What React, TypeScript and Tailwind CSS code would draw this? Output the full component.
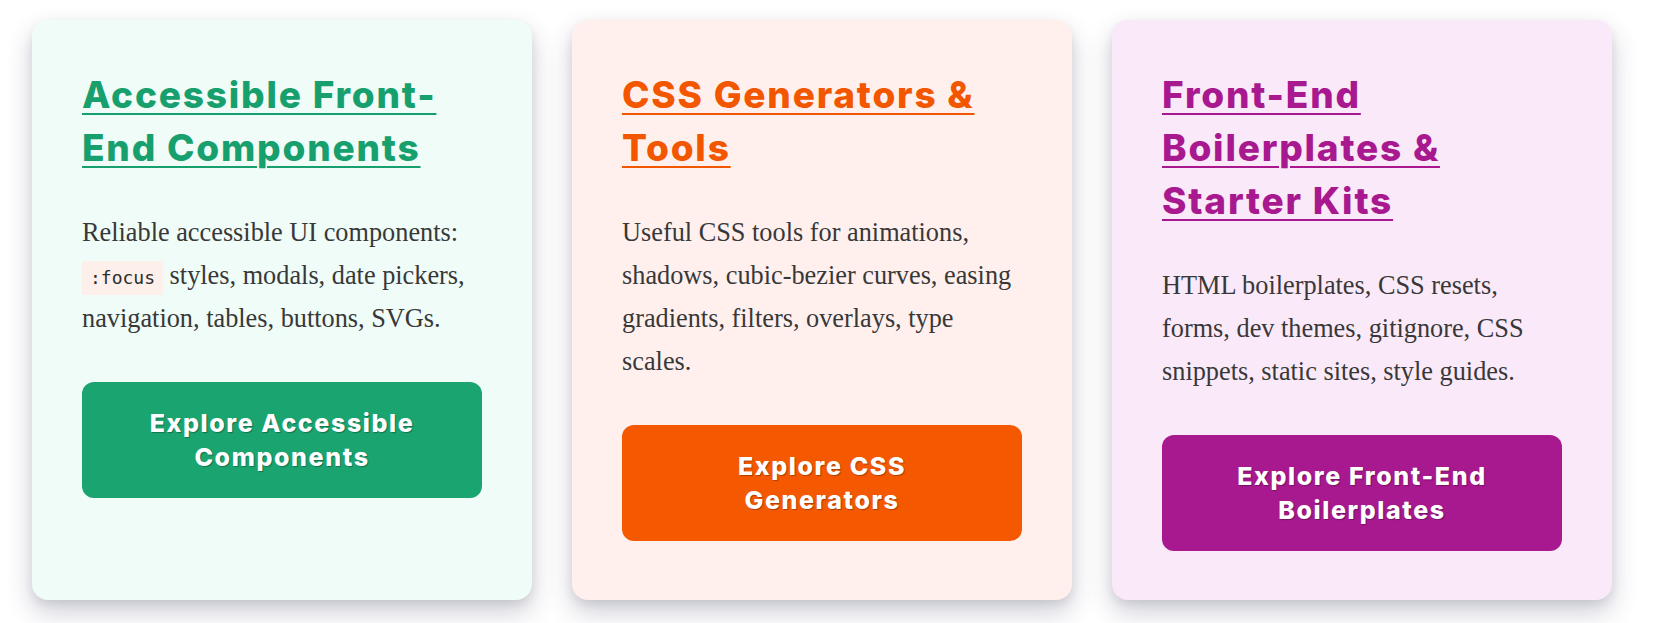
import React from "react";

type Card = {
  title: string;
  href: string;
  body: React.ReactNode;
  cta: string;
  bg: string;
  accent: string;
  button: string;
};

const cards: Card[] = [
  {
    title: "Accessible Front-End Components",
    href: "#accessible",
    body: (
      <>
        Reliable accessible UI components:{" "}
        <code className="inline-block bg-[#fdefe9] px-[8px] py-[7px] text-[18px] leading-[20px] text-[#2d2d2d] [font-family:'DejaVu_Sans_Mono',monospace]">
          :focus
        </code>{" "}
        styles, modals, date pickers, navigation, tables, buttons, SVGs.
      </>
    ),
    cta: "Explore Accessible Components",
    bg: "bg-[#effcf7]",
    accent: "text-[#17a06e]",
    button: "bg-[#19a470]",
  },
  {
    title: "CSS Generators & Tools",
    href: "#css-tools",
    body: "Useful CSS tools for animations, shadows, cubic-bezier curves, easing gradients, filters, overlays, type scales.",
    cta: "Explore CSS Generators",
    bg: "bg-[#fff0ee]",
    accent: "text-[#f25700]",
    button: "bg-[#f45800]",
  },
  {
    title: "Front-End Boilerplates & Starter Kits",
    href: "#boilerplates",
    body: "HTML boilerplates, CSS resets, forms, dev themes, gitignore, CSS snippets, static sites, style guides.",
    cta: "Explore Front-End Boilerplates",
    bg: "bg-[#fae9f8]",
    accent: "text-[#a8188f]",
    button: "bg-[#a8188f]",
  },
];

function ResourceCard({ card }: { card: Card }) {
  return (
    <article
      className={`${card.bg} w-[500px] rounded-2xl px-[50px] pt-12 pb-[49px] shadow-[0_12px_26px_rgba(50,50,93,0.24),0_4px_10px_rgba(0,0,0,0.08)]`}
    >
      {/* title doubles as the link */}
      <h2 className="mb-[37px] text-[37px] leading-[53px] font-extrabold tracking-[1.8px] [font-family:Inter,'Liberation_Sans',sans-serif]">
        <a
          href={card.href}
          className={`${card.accent} underline decoration-[1.5px] underline-offset-[5px]`}
        >
          {card.title}
        </a>
      </h2>
      <p className="mb-[42px] text-[26.3px] leading-[43px] text-[#383838] [font-family:'Liberation_Serif',serif]">
        {card.body}
      </p>
      <a
        href={card.href}
        className={`${card.button} block rounded-xl px-[60px] py-[24px] text-center text-[25px] leading-[34px] font-extrabold tracking-[1.6px] text-white [text-shadow:1px_1px_1px_rgba(0,0,0,0.3)] [font-family:Inter,'Liberation_Sans',sans-serif]`}
      >
        {card.cta}
      </a>
    </article>
  );
}

export default function App() {
  return (
    <main className="min-h-[623px] bg-white">
      <div className="flex items-stretch gap-10 pt-5 pl-8">
        {cards.map((card) => (
          <ResourceCard key={card.href} card={card} />
        ))}
      </div>
    </main>
  );
}
